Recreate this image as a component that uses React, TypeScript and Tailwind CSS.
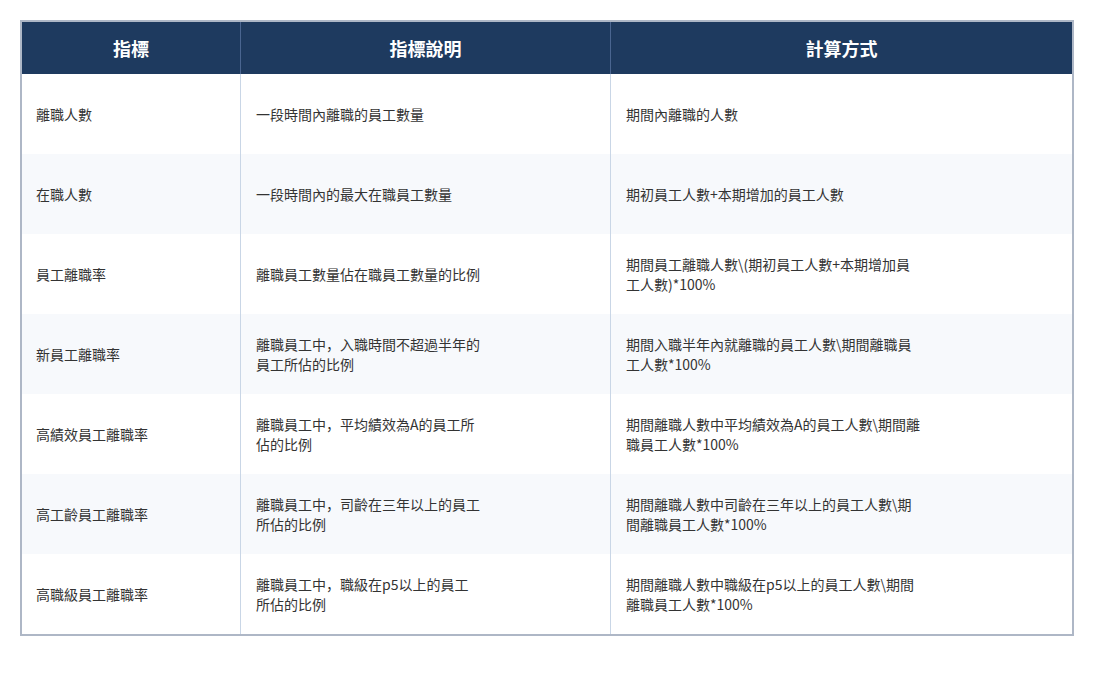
import React from "react";

const rows: [string, string, string][] = [
  ["離職人數", "一段時間內離職的員工數量", "期間內離職的人數"],
  ["在職人數", "一段時間內的最大在職員工數量", "期初員工人數+本期增加的員工人數"],
  ["員工離職率", "離職員工數量佔在職員工數量的比例", "期間員工離職人數\\(期初員工人數+本期增加員工人數)*100%"],
  ["新員工離職率", "離職員工中，入職時間不超過半年的員工所佔的比例", "期間入職半年內就離職的員工人數\\期間離職員工人數*100%"],
  ["高績效員工離職率", "離職員工中，平均績效為A的員工所佔的比例", "期間離職人數中平均績效為A的員工人數\\期間離職員工人數*100%"],
  ["高工齡員工離職率", "離職員工中，司齡在三年以上的員工所佔的比例", "期間離職人數中司齡在三年以上的員工人數\\期間離職員工人數*100%"],
  ["高職級員工離職率", "離職員工中，職級在p5以上的員工所佔的比例", "期間離職人數中職級在p5以上的員工人數\\期間離職員工人數*100%"],
];

export default function App() {
  return (
    <div className="min-h-screen bg-white p-5" style={{ fontFamily: '"Noto Sans CJK SC", "Noto Sans CJK TC", "Noto Sans", sans-serif' }}>
      <div className="border-2 border-[#aeb7c6]">
        {/* Header */}
        <div className="grid h-[52px] grid-cols-[218px_370px_1fr] bg-[#1e3a5f] text-[18px] font-bold text-white">
          <div className="flex items-center justify-center">指標</div>
          <div className="flex items-center justify-center border-l border-[#4a6590]">指標說明</div>
          <div className="flex items-center justify-center border-l border-[#4a6590]">計算方式</div>
        </div>

        {/* Body */}
        {rows.map((r, i) => (
          <div
            key={i}
            className={`grid h-20 grid-cols-[218px_370px_1fr] text-[14px] leading-5 text-[#333] ${i % 2 === 1 ? "bg-[#f7f9fc]" : "bg-white"}`}
          >
            <div className="flex items-center px-[14px]">{r[0]}</div>
            <div className="flex items-center border-l border-[#c9d6e6] px-[15px]">
              <div className="max-w-[225px]">{r[1]}</div>
            </div>
            <div className="flex items-center border-l border-[#c9d6e6] px-[15px]">
              <div className="max-w-[296px]">{r[2]}</div>
            </div>
          </div>
        ))}
      </div>
    </div>
  );
}
